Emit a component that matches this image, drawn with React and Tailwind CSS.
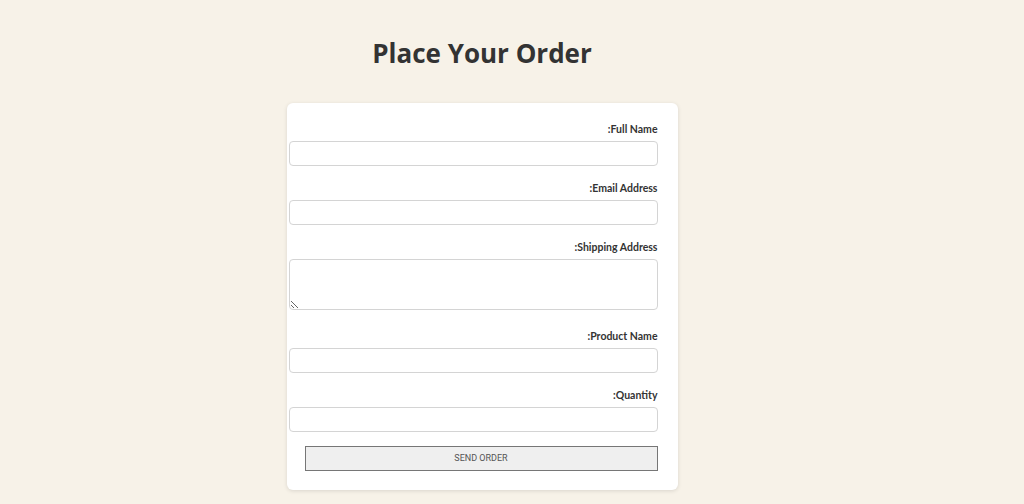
import React from "react";

const Label = ({ children }) => (
    <label
        className="block text-[10.5px] font-bold text-[#333] leading-[12px] mb-[6px]"
        style={{ fontFamily: "Lato, 'Open Sans', sans-serif" }}
    >
        {children}:
    </label>
);

const Field = ({ label, className = "" }) => {
    return (
        <div className={className}>
            <Label>{label}</Label>
            <input
                type="text"
                className="block h-[25px] border border-[#d4d4d4] rounded-[4px] bg-white"
                style={{ width: "calc(100% + 18px)" }}
            />
        </div>
    );
};

export default function App() {
    return (
        <div
            dir="rtl"
            className="min-h-[504px] bg-[#f7f2e8] text-[#333] pt-[33px] pb-4"
            style={{ fontFamily: "'Open Sans', 'Noto Sans', sans-serif" }}
        >
            <div className="w-[964px] ml-0 mr-auto">
                <h1 className="text-center text-[26px] font-bold leading-[40px] mb-[30px]" dir="ltr">
                    Place Your Order
                </h1>
                <div className="mx-auto w-[391px] bg-white rounded-[6px] shadow-[0_1px_4px_rgba(0,0,0,0.12)] p-5 pb-[19px]">
                    <Field label="Full Name" className="mb-[16px]" />
                    <Field label="Email Address" className="mb-[16px]" />
                    <div className="mb-[20px]">
                        <Label>Shipping Address</Label>
                        <textarea
                            className="block h-[51px] border border-[#d4d4d4] rounded-[4px] bg-white resize-y"
                            style={{ width: "calc(100% + 18px)" }}
                        />
                    </div>
                    <Field label="Product Name" className="mb-[16px]" />
                    <Field label="Quantity" className="mb-[14px]" />
                    <button
                        type="button"
                        className="block h-[25px] bg-[#efefef] border border-[#767676] text-[9px] text-[#555] uppercase"
                        style={{ width: "calc(100% + 2px)", fontFamily: "Roboto, 'Liberation Sans', sans-serif" }}
                    >
                        Send Order
                    </button>
                </div>
            </div>
        </div>
    );
}
